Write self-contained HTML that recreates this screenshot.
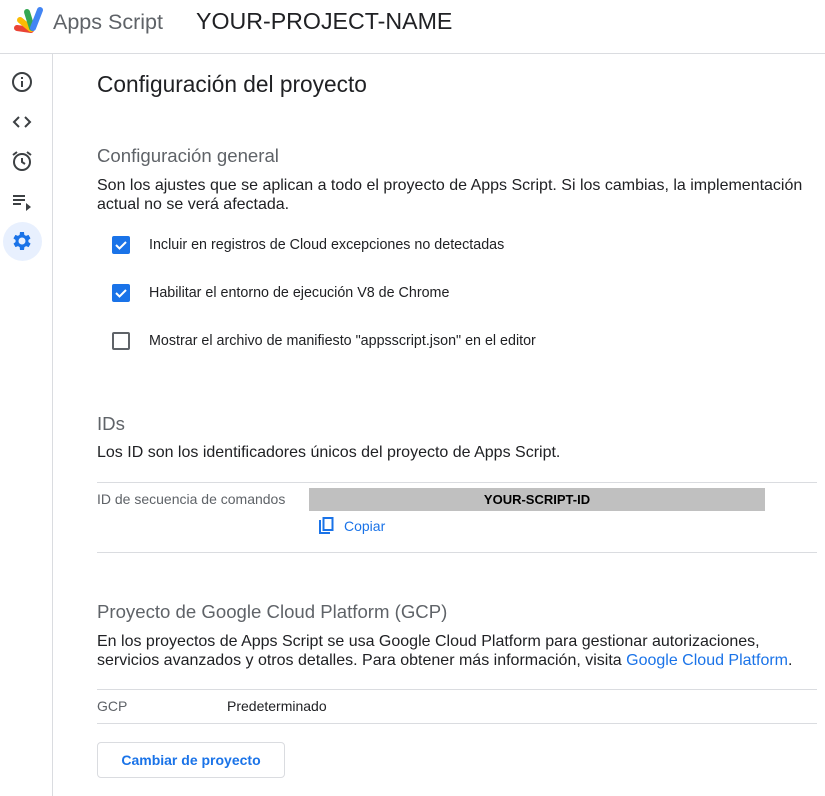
<!DOCTYPE html>
<html><head><meta charset="utf-8"><style>
*{margin:0;padding:0;box-sizing:border-box}
body{width:825px;height:796px;overflow:hidden;background:#fff;font-family:"Liberation Sans",Arial,sans-serif;color:#202124;position:relative}
.abs{position:absolute}
.hdr{left:0;top:0;width:825px;height:54px;border-bottom:1px solid #dadce0}
.side{left:52px;top:54px;width:1px;height:742px;background:#dadce0}
.t{position:absolute;white-space:nowrap}
.cb{position:absolute;width:18px;height:18px;border-radius:2px}
.on{background:#1a73e8}
.off{border:2px solid #5f6368}
.line{position:absolute;height:1px;background:#dadce0}
</style></head><body>
<div class="abs hdr"></div>
<svg class="abs" style="left:13px;top:6px" width="34" height="28" viewBox="0 0 34 28">
<g stroke-linecap="round" stroke-width="6" fill="none">
<line x1="4" y1="22" x2="18" y2="24" stroke="#ea4335"/>
<line x1="7" y1="14" x2="18" y2="23" stroke="#fbbc04"/>
<line x1="14" y1="6" x2="19" y2="22" stroke="#34a853"/>
<line x1="27" y1="4" x2="20" y2="22" stroke="#4285f4"/>
</g></svg>
<div class="t" style="left:53px;top:10px;font-size:21.5px;color:#5f6368">Apps Script</div>
<div class="t" style="left:196px;top:8px;font-size:23.2px;color:#202124">YOUR-PROJECT-NAME</div>
<div class="side abs"></div>
<svg class="abs" style="left:10px;top:70px" width="24" height="24" viewBox="0 0 24 24"><circle cx="12" cy="12" r="9" fill="none" stroke="#3c4043" stroke-width="2"/><rect x="11" y="11" width="2" height="6" fill="#3c4043"/><rect x="11" y="7" width="2" height="2" fill="#3c4043"/></svg>
<svg class="abs" style="left:10px;top:110px" width="24" height="24" viewBox="0 0 24 24"><path d="M9 7l-5 5 5 5M15 7l5 5-5 5" fill="none" stroke="#3c4043" stroke-width="2"/></svg>
<svg class="abs" style="left:10px;top:149px" width="24" height="24" viewBox="0 0 24 24"><circle cx="12" cy="13" r="8" fill="none" stroke="#3c4043" stroke-width="2"/><path d="M12 9v4l3 2M3 6l4-3M21 6l-4-3" fill="none" stroke="#3c4043" stroke-width="2"/></svg>
<svg class="abs" style="left:10px;top:190px" width="24" height="24" viewBox="0 0 24 24"><path d="M3 6h12M3 10h12M3 14h8" stroke="#3c4043" stroke-width="2"/><path d="M16 13l5 4-5 4z" fill="#3c4043"/></svg>
<div class="abs" style="left:3px;top:222px;width:39px;height:39px;border-radius:50%;background:#e8f0fe"></div>
<svg class="abs" style="left:10px;top:229px" width="24" height="24" viewBox="0 0 24 24"><path fill="#1a73e8" d="M19.4 13a7.5 7.5 0 000-2l2.1-1.6-2-3.5-2.5 1a7 7 0 00-1.7-1L15 3h-4l-.4 2.9a7 7 0 00-1.7 1l-2.5-1-2 3.5L6.6 11a7.5 7.5 0 000 2l-2.1 1.6 2 3.5 2.5-1a7 7 0 001.7 1L11 21h4l.4-2.9a7 7 0 001.7-1l2.5 1 2-3.5zM13 15.5a3.5 3.5 0 110-7 3.5 3.5 0 010 7z" transform="translate(-1 0)"/></svg>
<div class="t" style="left:97px;top:71px;font-size:22.7px">Configuración del proyecto</div>
<div class="t" style="left:97px;top:145px;font-size:18.6px;color:#5f6368">Configuración general</div>
<div class="t" style="left:97px;top:176px;font-size:16px;line-height:19px">Son los ajustes que se aplican a todo el proyecto de Apps Script. Si los cambias, la implementación<br>actual no se verá afectada.</div>
<div class="cb on" style="left:112px;top:236px"></div>
<svg class="abs" style="left:112px;top:236px" width="18" height="18"><path d="M4 9l3.5 3.5L14 6" fill="none" stroke="#fff" stroke-width="2"/></svg>
<div class="t" style="left:149px;top:237px;font-size:14.3px">Incluir en registros de Cloud excepciones no detectadas</div>
<div class="cb on" style="left:112px;top:284px"></div>
<svg class="abs" style="left:112px;top:284px" width="18" height="18"><path d="M4 9l3.5 3.5L14 6" fill="none" stroke="#fff" stroke-width="2"/></svg>
<div class="t" style="left:149px;top:285px;font-size:14.3px">Habilitar el entorno de ejecución V8 de Chrome</div>
<div class="cb off" style="left:112px;top:332px"></div>
<div class="t" style="left:149px;top:333px;font-size:14.3px">Mostrar el archivo de manifiesto "appsscript.json" en el editor</div>
<div class="t" style="left:97px;top:413px;font-size:18.6px;color:#5f6368">IDs</div>
<div class="t" style="left:97px;top:444px;font-size:16px">Los ID son los identificadores únicos del proyecto de Apps Script.</div>
<div class="line" style="left:97px;top:482px;width:720px"></div>
<div class="t" style="left:97px;top:491px;font-size:14px;color:#5f6368">ID de secuencia de comandos</div>
<div class="abs" style="left:309px;top:488px;width:456px;height:23px;background:#c0c0c0"></div>
<div class="t" style="left:309px;top:492px;width:456px;text-align:center;font-size:13px;font-weight:bold;color:#000">YOUR-SCRIPT-ID</div>
<svg class="abs" style="left:319px;top:517px" width="16" height="18" viewBox="0 0 16 18"><path d="M1 3v13h10" fill="none" stroke="#1a73e8" stroke-width="2"/><rect x="4.5" y="1" width="9" height="12" fill="none" stroke="#1a73e8" stroke-width="2"/></svg>
<div class="t" style="left:344px;top:518px;font-size:14px;color:#1a73e8">Copiar</div>
<div class="line" style="left:97px;top:552px;width:720px"></div>
<div class="t" style="left:97px;top:601px;font-size:18.6px;color:#5f6368">Proyecto de Google Cloud Platform (GCP)</div>
<div class="t" style="left:97px;top:632px;font-size:16px;line-height:19px">En los proyectos de Apps Script se usa Google Cloud Platform para gestionar autorizaciones,<br>servicios avanzados y otros detalles. Para obtener más información, visita <span style="color:#1a73e8">Google Cloud Platform</span>.</div>
<div class="line" style="left:97px;top:689px;width:720px"></div>
<div class="t" style="left:97px;top:698px;font-size:14px;color:#5f6368">GCP</div>
<div class="t" style="left:227px;top:698px;font-size:14px">Predeterminado</div>
<div class="line" style="left:97px;top:723px;width:720px"></div>
<div class="abs" style="left:97px;top:742px;width:188px;height:36px;border:1px solid #dadce0;border-radius:4px"></div>
<div class="t" style="left:97px;top:752px;width:188px;text-align:center;font-size:14px;color:#1a73e8;font-weight:bold">Cambiar de proyecto</div>
</body></html>
